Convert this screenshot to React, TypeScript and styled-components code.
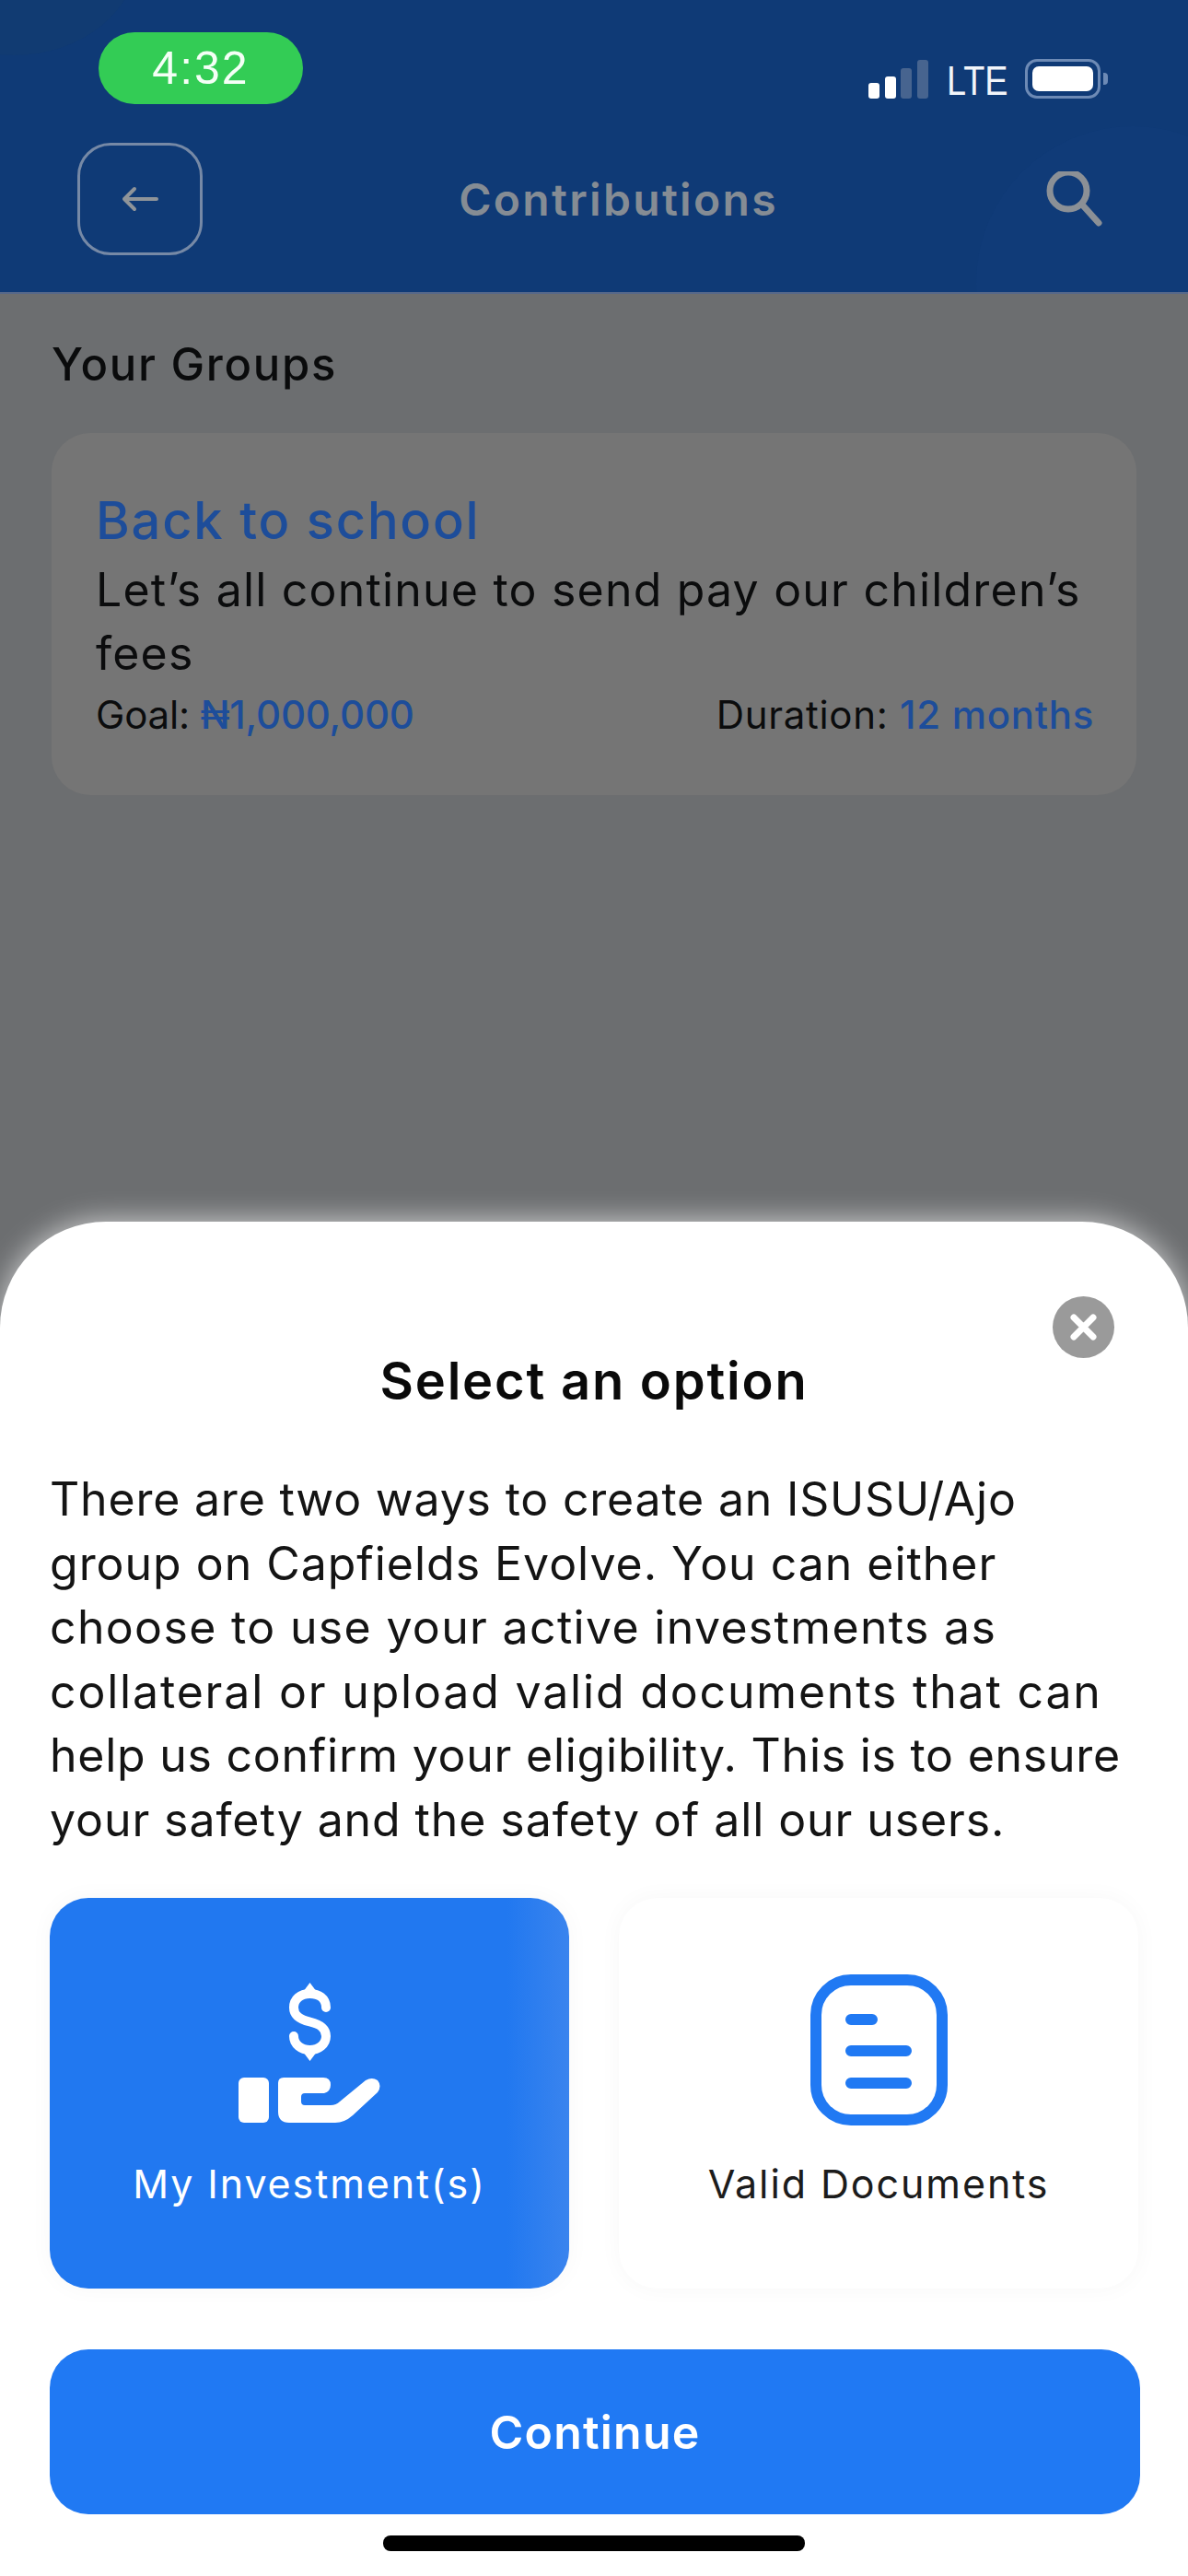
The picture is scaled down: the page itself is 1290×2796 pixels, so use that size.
import React from 'react'
import styled, { createGlobalStyle } from 'styled-components'

const FONT = `Inter, 'Noto Sans', 'Liberation Sans', sans-serif`

const GlobalStyle = createGlobalStyle`
  html, body {
    margin: 0;
    padding: 0;
    background: #6c6e70;
  }
  * {
    box-sizing: border-box;
  }
`

const Page = styled.div`
  display: flex;
  flex-direction: column;
  width: 1290px;
  height: 2796px;
  overflow: hidden;
  background: #6c6e70;
  font-family: ${FONT};
`

const Header = styled.header`
  position: relative;
  flex-shrink: 0;
  height: 319px;
  padding: 35px 93px 0 84px;
  background: #0f3a76;
  border-bottom: 2px solid #55688a;
  overflow: hidden;

  &::before {
    content: '';
    position: absolute;
    left: -120px;
    top: -160px;
    width: 270px;
    height: 220px;
    border-radius: 50%;
    background: #113b72;
  }

  &::after {
    content: '';
    position: absolute;
    right: -110px;
    bottom: -160px;
    width: 340px;
    height: 340px;
    border-radius: 50%;
    background: #103b78;
  }
`

const StatusBar = styled.div`
  position: relative;
  z-index: 1;
  display: flex;
  justify-content: space-between;
  align-items: flex-end;
  height: 78px;
  padding-left: 23px;
`

const TimePill = styled.div`
  display: flex;
  align-items: center;
  justify-content: center;
  width: 222px;
  height: 78px;
  border-radius: 39px;
  background: #33cc55;
  color: #f4fff6;
  font-family: 'Liberation Sans', sans-serif;
  font-size: 50px;
  letter-spacing: 2px;
`

const StatusRight = styled.div`
  display: flex;
  align-items: flex-end;
  gap: 20px;
  margin-right: 2px;
  padding-bottom: 6px;
`

const SignalBars = styled.div`
  display: flex;
  align-items: flex-end;
  gap: 5.6px;
`

const SignalBar = styled.span<{ $h: number; $on?: boolean }>`
  width: 12px;
  height: ${p => p.$h}px;
  border-radius: 3px;
  background: ${p => (p.$on ? '#ffffff' : '#47648f')};
`

const Lte = styled.span`
  width: 65px;
  color: #f2f5fa;
  font-family: 'Liberation Sans', sans-serif;
  font-size: 45px;
  line-height: 38px;
  white-space: nowrap;
  transform: scaleX(0.84);
  transform-origin: left center;
`

const Battery = styled.div`
  position: relative;
  width: 82px;
  height: 43px;
  padding: 5px;
  border: 3px solid #6d8ab5;
  border-radius: 13px;

  &::after {
    content: '';
    position: absolute;
    right: -11px;
    top: 12px;
    width: 5px;
    height: 13px;
    border-radius: 0 4px 4px 0;
    background: #6d8ab5;
  }
`

const BatteryFill = styled.div`
  width: 100%;
  height: 100%;
  border-radius: 7px;
  background: #ffffff;
`

const NavRow = styled.div`
  position: relative;
  z-index: 1;
  display: flex;
  justify-content: space-between;
  align-items: center;
  margin-top: 42px;
`

const BackButton = styled.button`
  display: flex;
  align-items: center;
  justify-content: center;
  width: 136px;
  height: 122px;
  padding: 0;
  border: 3px solid #7689a6;
  border-radius: 36px;
  background: transparent;
`

const NavTitle = styled.h1`
  margin: 0 12px 0 0;
  color: #858c94;
  font-size: 48px;
  font-weight: 600;
  letter-spacing: 2.3px;
  white-space: nowrap;
`

const Content = styled.main`
  flex: 1;
  padding: 49px 56px 0 56px;
`

const SectionTitle = styled.h2`
  margin: 0 0 46px;
  color: #0a0b0c;
  font-size: 49px;
  font-weight: 500;
  line-height: 56px;
  letter-spacing: 1.7px;
`

const GroupCard = styled.article`
  height: 393px;
  padding: 62px 46px 0 48px;
  border-radius: 42px;
  background: #757575;
`

const GroupName = styled.h3`
  margin: 0 0 8px;
  color: #1d4d9a;
  font-size: 56px;
  font-weight: 500;
  line-height: 66px;
  letter-spacing: 1.8px;
`

const GroupText = styled.p`
  margin: 0;
  color: #0b0c0d;
  font-size: 50px;
  line-height: 69px;
  letter-spacing: 1.2px;
`

const GroupMeta = styled.div`
  display: flex;
  justify-content: space-between;
  margin-top: 2px;
  color: #0b0c0d;
  font-size: 42px;
  line-height: 60px;
`

const MetaItem = styled.span<{ $spacing: number }>`
  letter-spacing: ${p => p.$spacing}px;
`

const MetaValue = styled.span`
  color: #1d4d9a;
  font-weight: 500;
`

const Sheet = styled.section`
  position: relative;
  flex-shrink: 0;
  height: 1470px;
  padding: 0 54px;
  border-radius: 115px 115px 0 0;
  background: #ffffff;
  box-shadow: 0 -2px 30px rgba(255, 255, 255, 0.65);
`

const CloseButton = styled.button`
  position: absolute;
  top: 81px;
  right: 80px;
  display: flex;
  align-items: center;
  justify-content: center;
  width: 67px;
  height: 67px;
  padding: 0;
  border: none;
  border-radius: 50%;
  background: #9a9a9a;
`

const SheetTitle = styled.h2`
  margin: 0;
  padding-top: 133px;
  color: #0a0a0a;
  font-size: 56px;
  font-weight: 600;
  line-height: 80px;
  letter-spacing: 1.8px;
  text-align: center;
`

const Intro = styled.p`
  margin: 54px 0 0;
  color: #141414;
  font-size: 50px;
  line-height: 69.6px;
`

const IntroLine = styled.span<{ $spacing: number }>`
  display: block;
  letter-spacing: ${p => p.$spacing}px;
  white-space: nowrap;
`

const Options = styled.div`
  display: grid;
  grid-template-columns: 564px 564px;
  gap: 54px;
  margin-top: 49px;
`

const OptionCard = styled.div<{ $active?: boolean }>`
  display: flex;
  flex-direction: column;
  align-items: center;
  height: 424px;
  border-radius: 42px;
  background: ${p => (p.$active ? 'linear-gradient(90deg, #2178f0 88%, #3a84ee 100%)' : '#ffffff')};
  box-shadow: 0 0 26px rgba(0, 0, 0, 0.035);
`

const IconSlot = styled.div<{ $inset?: number }>`
  display: flex;
  flex-direction: column;
  align-items: center;
  justify-content: flex-end;
  gap: 18px;
  height: 247px;
  padding-bottom: ${p => p.$inset ?? 0}px;
`

const OptionLabel = styled.span<{ $active?: boolean }>`
  margin-top: 33px;
  color: ${p => (p.$active ? '#ffffff' : '#1c1c1c')};
  font-size: 43px;
  line-height: 60px;
  letter-spacing: 1.9px;
  white-space: nowrap;
`

const ContinueButton = styled.button`
  display: block;
  width: 1184px;
  height: 179px;
  margin-top: 66px;
  border: none;
  border-radius: 42px;
  background: #2079f3;
  color: #ffffff;
  font-family: ${FONT};
  font-size: 50px;
  font-weight: 600;
  letter-spacing: 1.2px;
  line-height: 60px;
  padding: 2px 0 0;
`

const HomeBar = styled.div`
  width: 458px;
  height: 17px;
  margin: 23px auto 0;
  border-radius: 8px;
  background: #000000;
`

const ArrowIcon = () => (
  <svg width="40" height="28" viewBox="0 0 40 28" fill="none" stroke="#8f9499" strokeWidth="4" strokeLinecap="round" strokeLinejoin="round">
    <path d="M38 14H3M14 3 3 14l11 11" />
  </svg>
)

const SearchIcon = () => (
  <svg width="62" height="60" viewBox="0 0 62 60" fill="none" stroke="#8b9096" strokeWidth="7" strokeLinecap="round">
    <circle cx="25" cy="21" r="20" />
    <path d="M40 36 58 56" />
  </svg>
)

const CloseIcon = () => (
  <svg width="31" height="31" viewBox="0 0 31 31" fill="none" stroke="#ffffff" strokeWidth="7" strokeLinecap="round">
    <path d="M5 5 26 26M26 5 5 26" />
  </svg>
)

const DollarIcon = () => (
  <svg width="47" height="85" viewBox="0 0 47 85" fill="none">
    <path
      d="M41 27C41 17 33 12 23.5 12 13 12 6 18 6 27 6 36 13 40 23.5 42.5 34 45 41 49 41 58 41 67 33 73 23.5 73 14 73 6 67 6 58"
      stroke="#ffffff"
      strokeWidth="10"
      strokeLinecap="round"
    />
    <path d="M23.5 0 31 10H16ZM23.5 85 31 75H16Z" fill="#ffffff" />
  </svg>
)

const HandIcon = () => (
  <svg width="154" height="49" viewBox="0 0 154 49" fill="#ffffff">
    <rect x="0" y="0" width="33" height="49" rx="6" />
    <path d="M49 0H92Q100 0 100 8 100 15 93 17H72Q68 17 68 21V26Q68 30 72 30H100Q106 30 110 26L138 3Q145-1 151 3 156 9 151 16L124 41Q115 49 105 49H55Q43 49 43 37V6Q43 0 49 0Z" />
  </svg>
)

const DocumentIcon = () => (
  <svg width="149" height="164" viewBox="0 0 149 164" fill="none" stroke="#2079f3" strokeLinecap="round">
    <rect x="6" y="6" width="137" height="152" rx="38" strokeWidth="12" />
    <path d="M44 49H67M44 83H104M44 118H104" strokeWidth="12" />
  </svg>
)

// spacing per line so the line ends land where they do in the design
const introLines = [
  { text: 'There are two ways to create an ISUSU/Ajo', spacing: 0.8 },
  { text: 'group on Capfields Evolve. You can either', spacing: 0.97 },
  { text: 'choose to use your active investments as', spacing: 1.33 },
  { text: 'collateral or upload valid documents that can', spacing: 1.82 },
  { text: 'help us confirm your eligibility. This is to ensure', spacing: 0.75 },
  { text: 'your safety and the safety of all our users.', spacing: 0.91 },
]

export default function App() {
  return (
    <Page>
      <GlobalStyle />
      <Header>
        <StatusBar>
          <TimePill>4:32</TimePill>
          <StatusRight>
            <SignalBars>
              <SignalBar $h={17} $on />
              <SignalBar $h={24} $on />
              <SignalBar $h={33} />
              <SignalBar $h={42} />
            </SignalBars>
            <Lte>LTE</Lte>
            <Battery>
              <BatteryFill />
            </Battery>
          </StatusRight>
        </StatusBar>
        <NavRow>
          <BackButton aria-label="Back">
            <ArrowIcon />
          </BackButton>
          <NavTitle>Contributions</NavTitle>
          <SearchIcon />
        </NavRow>
      </Header>

      <Content>
        <SectionTitle>Your Groups</SectionTitle>
        <GroupCard>
          <GroupName>Back to school</GroupName>
          <GroupText>
            Let’s all continue to send pay our children’s
            <br />
            fees
          </GroupText>
          <GroupMeta>
            <MetaItem $spacing={-0.2}>
              Goal: <MetaValue>₦1,000,000</MetaValue>
            </MetaItem>
            <MetaItem $spacing={0.7}>
              Duration: <MetaValue>12 months</MetaValue>
            </MetaItem>
          </GroupMeta>
        </GroupCard>
      </Content>

      <Sheet>
        <CloseButton aria-label="Close">
          <CloseIcon />
        </CloseButton>
        <SheetTitle>Select an option</SheetTitle>
        <Intro>
          {introLines.map(line => (
            <IntroLine key={line.text} $spacing={line.spacing}>
              {line.text}
            </IntroLine>
          ))}
        </Intro>
        <Options>
          <OptionCard $active>
            <IconSlot $inset={3}>
              <DollarIcon />
              <HandIcon />
            </IconSlot>
            <OptionLabel $active>My Investment(s)</OptionLabel>
          </OptionCard>
          <OptionCard>
            <IconSlot>
              <DocumentIcon />
            </IconSlot>
            <OptionLabel>Valid Documents</OptionLabel>
          </OptionCard>
        </Options>
        <ContinueButton>Continue</ContinueButton>
        <HomeBar />
      </Sheet>
    </Page>
  )
}
